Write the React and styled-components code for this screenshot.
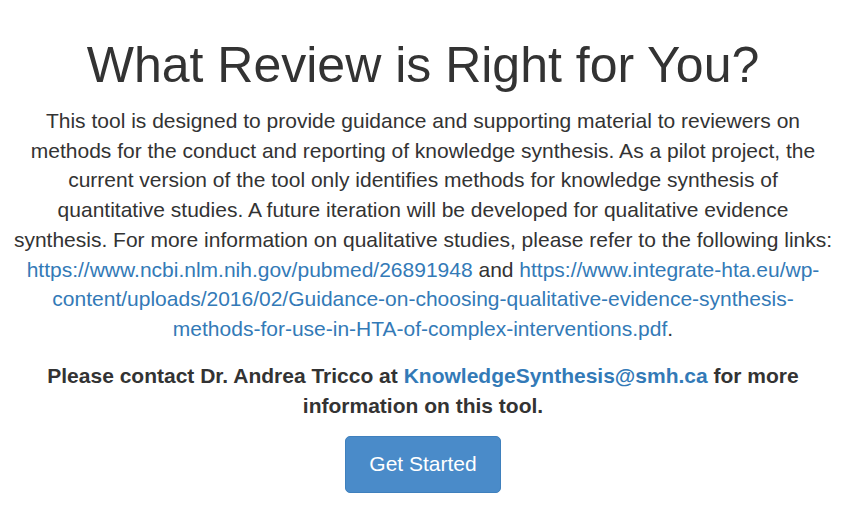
import React from "react";
import styled, { createGlobalStyle } from "styled-components";

const Global = createGlobalStyle`
  html, body { margin: 0; padding: 0; background: #fff; }
  body { font-family: "Liberation Sans", Arial, sans-serif; color: #333; }
`;

const Page = styled.main`
  padding: 38px 20px 0 10px;
  text-align: center;
`;

const Title = styled.h1`
  margin: 0;
  font-size: 50px;
  font-weight: 400;
  line-height: 1.1;
  color: #333;
`;

const Lead = styled.p`
  margin: 13px 0 0;
  font-size: 21px;
  line-height: 29.7px;
`;

const Contact = styled.p`
  margin: 17px 0 0;
  font-size: 21px;
  line-height: 30px;
  font-weight: 700;
`;

const Link = styled.a`
  color: #337ab7;
  text-decoration: none;
`;

const Button = styled.button`
  margin-top: 15px;
  background: #4a8bc9;
  color: #fff;
  border: 1px solid #3f80bd;
  border-radius: 5px;
  font-family: inherit;
  font-size: 21px;
  width: 156px;
  height: 57px;
  cursor: pointer;
`;

export default function App() {
  return (
    <>
      <Global />
      <Page>
        <Title>What Review is Right for You?</Title>
        <Lead>
          This tool is designed to provide guidance and supporting material to reviewers on methods for the conduct and reporting of knowledge synthesis. As a pilot project, the current version of the tool only identifies methods for knowledge synthesis of
          <br />
          quantitative studies. A future iteration will be developed for qualitative evidence
          <br />
          synthesis. For more information on qualitative studies, please refer to the following links:{" "}
          <Link href="#">https://www.ncbi.nlm.nih.gov/pubmed/26891948</Link> and{" "}
          <Link href="#">https://www.integrate-hta.eu/wp-content/uploads/2016/02/Guidance-on-choosing-qualitative-evidence-synthesis-methods-for-use-in-HTA-of-complex-interventions.pdf</Link>.
        </Lead>
        <Contact>
          Please contact Dr. Andrea Tricco at <Link href="#">KnowledgeSynthesis@smh.ca</Link> for more information on this tool.
        </Contact>
        <Button>Get Started</Button>
      </Page>
    </>
  );
}
